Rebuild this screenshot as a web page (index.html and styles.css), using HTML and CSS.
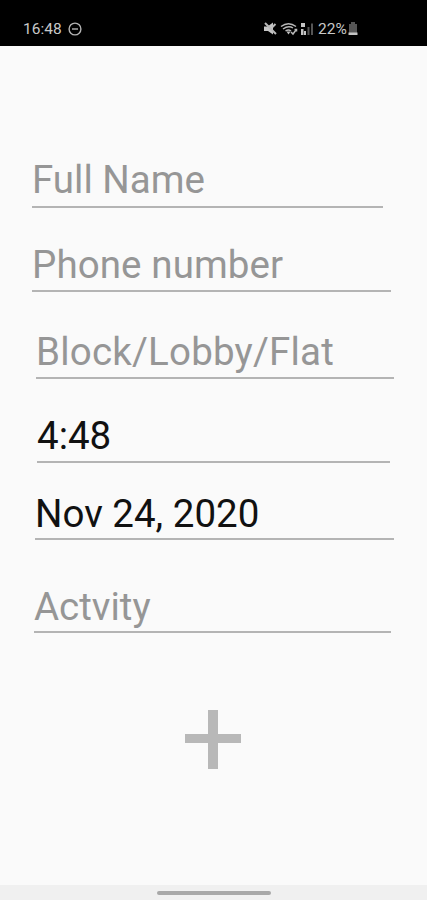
FILE: index.html
```html
<!DOCTYPE html>
<html lang="en">
<head>
<meta charset="utf-8">
<title>Visitor form</title>
<link rel="stylesheet" href="styles.css">
</head>
<body>
<header class="status">
  <span class="clock">16:48</span>
  <svg class="dnd" viewBox="0 0 14 14" width="14" height="14"><circle cx="7" cy="7" r="5.9"/><path d="M4 7h6"/></svg>
  <div class="indicators">
    <svg width="90" height="16" viewBox="0 0 90 16">
      <path class="solid" d="M0 5.500h3.500L9 1.500v12l-5-3.500H0z"/><path class="line thick" d="M1 2l11 11M8.500 6l3-3"/>
      <path class="line" d="M17 5.500Q24.500 0 32 5.500M19 8Q24.500 4 29 7M21.500 10Q24.500 8 27 10"/><path class="solid" d="M22.500 10.500h4l-2 3z"/><path class="line" d="M27 11l2 2 3-4M30.500 8.500h2v2"/>
      <path class="solid" d="M37 2h4v4h-4zM37 8h2.500v6H37zM40 10h2v4h-2z"/><path class="dim" d="M43.500 6h2v8h-2zM47 2.500h2v11.500h-2z"/>
      <text x="54" y="13">22%</text>
    </svg>
    <svg class="battery" width="10" height="14" viewBox="0 0 10 14"><path class="dim" d="M3 0h4v2h2v9H1V2h2z"/><path class="solid" d="M.5 10.500h9V13h-9z"/></svg>
  </div>
</header>
<main class="form">
  <div class="field name"><span>Full Name</span></div>
  <div class="field phone"><span>Phone number</span></div>
  <div class="field block"><span>Block/Lobby/Flat</span></div>
  <div class="field time filled"><span>4:48</span></div>
  <div class="field date filled"><span>Nov 24, 2020</span></div>
  <div class="field activity"><span>Actvity</span></div>
  <svg class="add" viewBox="0 0 56 59" width="56" height="59"><path d="M23 0h10v24h23v9H33v26H23V33H0v-9h23z"/></svg>
</main>
<footer class="nav"><div class="handle"></div></footer>
</body>
</html>
```
FILE: styles.css
```css
* { box-sizing: border-box; }
body {
  margin: 0;
  height: 900px;
  display: flex;
  flex-direction: column;
  background: #fafafa;
  font-family: Roboto, sans-serif;
  overflow: hidden;
}
.status {
  height: 46px;
  padding: 12px 69px 0 23px;
  display: flex;
  align-items: center;
  background: #000;
  color: #c8c8c8;
}
.clock { font-size: 15.5px; line-height: 18px; }
.dnd { margin-left: 6px; fill: none; stroke: #b4b4b4; stroke-width: 1.4; }
.indicators { margin-left: auto; display: flex; align-items: center; }
.indicators text { font-size: 15.5px; fill: #c8c8c8; }
.indicators svg { overflow: visible; }
.battery { margin-left: -6px; }
.solid { fill: #c4c4c4; }
.dim { fill: #555; }
.line { fill: none; stroke: #b8b8b8; stroke-width: 1.5; }
.thick { stroke-width: 2; }
.form {
  flex: 1;
  display: flex;
  flex-direction: column;
  align-items: flex-start;
  padding-top: 114px;
}
.field {
  height: 48px;
  border-bottom: 2px solid #b4b4b4;
  color: #969696;
  font-size: 38.5px;
  line-height: 41px;
  white-space: nowrap;
}
.filled { color: #111; }
.name { width: 351px; margin-left: 32px; line-height: 40px; }
.phone { width: 359px; margin: 36px 0 0 32px; letter-spacing: .1px; }
.block { width: 358px; margin: 39px 0 0 36px; letter-spacing: .2px; }
.time { width: 353px; margin: 36px 0 0 37px; }
.date { width: 359px; height: 47px; margin: 30px 0 0 35px; }
.activity { width: 357px; height: 47px; margin: 46px 0 0 34px; }
.add { margin: 77px 0 0 185px; fill: #b8b8b8; }
.nav {
  height: 15px;
  padding-top: 6px;
  display: flex;
  justify-content: center;
  background: #f0f0f0;
}
.handle { width: 114px; height: 4px; border-radius: 2px; background: #a8a8a8; }
```
